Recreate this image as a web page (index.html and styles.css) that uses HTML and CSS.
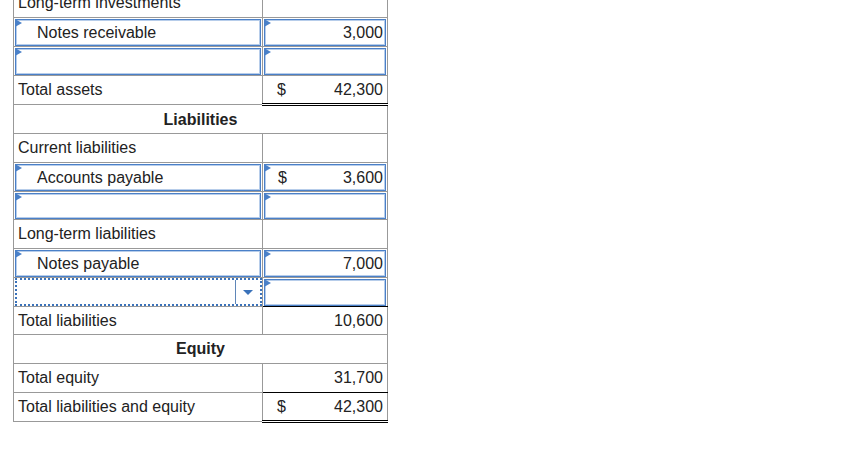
FILE: index.html
```html
<!DOCTYPE html>
<html>
<head>
<meta charset="utf-8">
<link rel="stylesheet" href="styles.css">
</head>
<body>
<div class="page">
<table class="bs">
  <colgroup><col class="c1"><col class="c2"></colgroup>
  <tr>
    <td class="lbl">Long-term investments</td>
    <td class="val"></td>
  </tr>
  <tr>
    <td class="inp"><div class="box"><span class="flag"></span><span class="ind">Notes receivable</span></div></td>
    <td class="inp"><div class="box amt"><span class="flag"></span><span class="cur"></span><span>3,000</span></div></td>
  </tr>
  <tr>
    <td class="inp"><div class="box"><span class="flag"></span></div></td>
    <td class="inp"><div class="box amt"><span class="flag"></span></div></td>
  </tr>
  <tr>
    <td class="lbl">Total assets</td>
    <td class="val dbl"><span class="cur">$</span><span>42,300</span></td>
  </tr>
  <tr>
    <td class="hdr" colspan="2">Liabilities</td>
  </tr>
  <tr>
    <td class="lbl">Current liabilities</td>
    <td class="val"></td>
  </tr>
  <tr>
    <td class="inp"><div class="box"><span class="flag"></span><span class="ind">Accounts payable</span></div></td>
    <td class="inp"><div class="box amt"><span class="flag"></span><span class="cur">$</span><span>3,600</span></div></td>
  </tr>
  <tr class="short">
    <td class="inp"><div class="box"><span class="flag"></span></div></td>
    <td class="inp"><div class="box amt"><span class="flag"></span></div></td>
  </tr>
  <tr>
    <td class="lbl">Long-term liabilities</td>
    <td class="val"></td>
  </tr>
  <tr>
    <td class="inp"><div class="box"><span class="flag"></span><span class="ind">Notes payable</span></div></td>
    <td class="inp"><div class="box amt"><span class="flag"></span><span class="cur"></span><span>7,000</span></div></td>
  </tr>
  <tr>
    <td class="dd"><div class="ddbox"><div class="ddarrow"><span class="tri"></span></div></div></td>
    <td class="inp under"><div class="box amt"><span class="flag"></span></div></td>
  </tr>
  <tr class="short">
    <td class="lbl">Total liabilities</td>
    <td class="val"><span class="cur"></span><span>10,600</span></td>
  </tr>
  <tr>
    <td class="hdr" colspan="2">Equity</td>
  </tr>
  <tr>
    <td class="lbl">Total equity</td>
    <td class="val under"><span class="cur"></span><span>31,700</span></td>
  </tr>
  <tr>
    <td class="lbl">Total liabilities and equity</td>
    <td class="val dbl"><span class="cur">$</span><span>42,300</span></td>
  </tr>
</table>
</div>
</body>
</html>
```

FILE: styles.css
```css
html, body {
  margin: 0;
  padding: 0;
  background: #ffffff;
}
body {
  font-family: "Liberation Sans", Arial, sans-serif;
  font-size: 16px;
  color: #222222;
}
.page {
  padding-left: 13px;
}
.bs {
  border-collapse: collapse;
  width: 374px;
  margin-top: -12px;
  table-layout: fixed;
}
.c1 { width: 249px; }
.c2 { width: 125px; }
.bs tr {
  height: 29px;
}
.bs tr.short {
  height: 28px;
}
.bs td {
  border: 1px solid #999999;
  padding: 0 4px;
  vertical-align: middle;
  white-space: nowrap;
  line-height: 18px;
}
.bs td.hdr {
  text-align: center;
  font-weight: bold;
}
.bs td.val {
  padding: 0 4px 0 14px;
  text-align: right;
}
.bs td.val .cur {
  float: left;
}
.bs td.inp {
  padding: 1px 1px 0 1px;
}
.box {
  position: relative;
  box-sizing: border-box;
  height: 27px;
  border: 1px solid #4a80c8;
  box-shadow: inset 0 0 0 1px #b7cdea;
  background: #ffffff;
  display: flex;
  align-items: center;
}
.short .box {
  height: 26px;
}
.box.amt {
  justify-content: space-between;
  padding: 0 2px 0 13px;
}
.flag {
  position: absolute;
  left: -1px;
  top: -1px;
  width: 0;
  height: 0;
  border-top: 4px solid transparent;
  border-bottom: 4px solid transparent;
  border-left: 7px solid #4a80c8;
}
.ind {
  padding-left: 21px;
}
.bs td.dd {
  padding: 0;
}
.ddbox {
  box-sizing: border-box;
  height: 28px;
  margin-left: 1px;
  border: 2px dotted #3a72ba;
  display: flex;
  justify-content: flex-end;
}
.ddarrow {
  width: 24px;
  border-left: 1px solid #5f86b8;
  display: flex;
  align-items: center;
  justify-content: center;
}
.tri {
  width: 0;
  height: 0;
  border-left: 5px solid transparent;
  border-right: 5px solid transparent;
  border-top: 5px solid #3a72ba;
}
.bs td.under {
  border-bottom: 1px solid #000000;
}
.bs td.dbl {
  border-bottom: 3px double #000000;
}
```
